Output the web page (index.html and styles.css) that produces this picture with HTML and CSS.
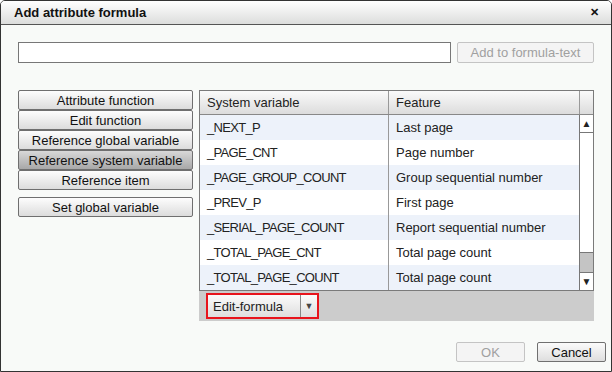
FILE: index.html
```html
<!DOCTYPE html>
<html lang="en">
<head>
    <meta charset="UTF-8">
    <title>Add attribute formula</title>
    <link rel="stylesheet" href="styles.css">
</head>
<body>

    <div class="dialog">
        <div class="titlebar">
            <span class="title">Add attribute formula</span>
            <span class="close">&#x2715;</span>
        </div>

        <div class="content">
            <div class="formula-row">
                <input type="text" class="formula-input">
                <button type="button" class="btn add-btn" disabled>Add to formula-text</button>
            </div>

            <div class="main">
                <div class="side">
                    <div class="side-group">
                        <button type="button" class="side-btn">Attribute function</button>
                        <button type="button" class="side-btn">Edit function</button>
                        <button type="button" class="side-btn">Reference global variable</button>
                        <button type="button" class="side-btn active">Reference system variable</button>
                        <button type="button" class="side-btn">Reference item</button>
                    </div>
                    <button type="button" class="side-btn">Set global variable</button>
                </div>

                <div class="panel">
                    <div class="grid">
                        <div class="grid-head">
                            <div class="cell">System variable</div>
                            <div class="cell">Feature</div>
                            <div class="cell corner"></div>
                        </div>
                        <div class="grid-body">
                            <div class="rows">
                                <div class="row"><div class="cell name">_NEXT_P</div><div class="cell">Last page</div></div>
                                <div class="row"><div class="cell name">_PAGE_CNT</div><div class="cell">Page number</div></div>
                                <div class="row"><div class="cell name">_PAGE_GROUP_COUNT</div><div class="cell">Group sequential number</div></div>
                                <div class="row"><div class="cell name">_PREV_P</div><div class="cell">First page</div></div>
                                <div class="row"><div class="cell name">_SERIAL_PAGE_COUNT</div><div class="cell">Report sequential number</div></div>
                                <div class="row"><div class="cell name">_TOTAL_PAGE_CNT</div><div class="cell">Total page count</div></div>
                                <div class="row"><div class="cell name">_TOTAL_PAGE_COUNT</div><div class="cell">Total page count</div></div>
                            </div>
                            <div class="scrollbar">
                                <div class="arrow">&#9650;</div>
                                <div class="track"><div class="thumb"></div></div>
                                <div class="arrow">&#9660;</div>
                            </div>
                        </div>
                    </div>
                    <div class="toolbar">
                        <div class="split-btn">
                            <span class="split-label">Edit-formula</span>
                            <span class="split-arrow">&#9660;</span>
                        </div>
                    </div>
                </div>
            </div>
        </div>

        <div class="footer">
            <button type="button" class="btn ok-btn" disabled>OK</button>
            <button type="button" class="btn">Cancel</button>
        </div>
    </div>

</body>
</html>
```

FILE: styles.css
```css
body {
    margin: 0;
    padding: 0;
    font-family: 'Liberation Sans', Arial, sans-serif;
    font-size: 13px;
    color: #222;
    background-color: #ffffff;
}
.dialog {
    width: 612px;
    height: 372px;
    box-sizing: border-box;
    border: 1px solid #333;
    border-radius: 5px 5px 0 0;
    background-color: #f8faf8;
    display: flex;
    flex-direction: column;
    overflow: hidden;
}
.titlebar {
    height: 23px;
    border-bottom: 1px solid #555;
    background: linear-gradient(#ffffff, #dcdddc);
    display: flex;
    align-items: center;
    justify-content: space-between;
    padding: 0 12px 0 13px;
}
.title {
    font-weight: bold;
    font-size: 13px;
    color: #111;
}
.close {
    font-size: 11px;
    font-weight: bold;
    color: #111;
}
.content {
    padding: 17px 16px 0 17px;
    flex: 1;
}
.formula-row {
    display: flex;
    gap: 6px;
}
.formula-input {
    width: 433px;
    height: 21px;
    box-sizing: border-box;
    border: 1px solid #777;
    background-color: #fff;
    margin: 0;
    padding: 0 4px;
}
.btn {
    height: 21px;
    box-sizing: border-box;
    border: 1px solid #707070;
    border-radius: 2px;
    background: linear-gradient(#fbfbfb, #dedede);
    font-family: inherit;
    font-size: 13px;
    color: #111;
    padding: 0;
    margin: 0;
}
.btn:disabled {
    border-color: #c4c4c4;
    background: #f4f4f4;
    color: #a0a0a0;
}
.add-btn {
    width: 137px;
}
.main {
    display: flex;
    gap: 6px;
    margin-top: 27px;
}
.side {
    width: 175px;
    display: flex;
    flex-direction: column;
    gap: 7px;
}
.side-group {
    display: flex;
    flex-direction: column;
}
.side-btn {
    height: 20px;
    box-sizing: border-box;
    border: 1px solid #6f6f6f;
    border-radius: 2px;
    background: linear-gradient(#fdfdfd, #dcdcdc);
    font-family: inherit;
    font-size: 13px;
    color: #111;
    padding: 0;
    margin: 0;
}
.side-btn.active {
    background: linear-gradient(#d8d8d8, #a8a8a8);
}
.panel {
    width: 395px;
}
.grid {
    border: 1px solid #7a7a7a;
    background-color: #fff;
}
.grid-head {
    display: grid;
    grid-template-columns: 188px 191px 14px;
    height: 23px;
    border-bottom: 1px solid #888;
    background: linear-gradient(#fafafa, #dcdcdc);
}
.cell {
    padding-left: 7px;
    display: flex;
    align-items: center;
    white-space: nowrap;
}
.cell.name {
    letter-spacing: -0.7px;
}
.grid-head .cell + .cell {
    border-left: 1px solid #999;
}
.grid-head .corner {
    padding: 0;
}
.grid-body {
    display: flex;
}
.rows {
    width: 379px;
}
.row {
    display: grid;
    grid-template-columns: 188px 191px;
    height: 25px;
}
.row:nth-child(odd) {
    background-color: #edf2fa;
}
.row .cell + .cell {
    border-left: 1px solid #999;
}
.scrollbar {
    width: 14px;
    border-left: 1px solid #777;
    display: flex;
    flex-direction: column;
    background-color: #fff;
}
.arrow {
    height: 17px;
    font-size: 10px;
    display: flex;
    align-items: center;
    justify-content: center;
    color: #222;
}
.arrow:first-child {
    border-bottom: 1px solid #777;
}
.arrow:last-child {
    border-top: 1px solid #777;
}
.track {
    flex: 1;
    display: flex;
    flex-direction: column;
    justify-content: flex-end;
}
.thumb {
    height: 19px;
    border-top: 1px solid #777;
    background-color: #c4c4c4;
}
.toolbar {
    height: 30px;
    background-color: #cccccc;
    display: flex;
    align-items: center;
    padding-left: 7px;
}
.split-btn {
    width: 109px;
    height: 22px;
    border: 2px solid #e8141c;
    background: linear-gradient(#fbfbfb, #dedede);
    display: flex;
    align-items: center;
}
.split-label {
    width: 93px;
    padding-left: 5px;
    box-sizing: border-box;
    border-right: 1px solid #888;
    height: 100%;
    display: flex;
    align-items: center;
}
.split-arrow {
    flex: 1;
    text-align: center;
    font-size: 9px;
    color: #444;
}
.footer {
    display: flex;
    justify-content: flex-end;
    gap: 12px;
    padding: 0 5px 9px 0;
}
.footer .btn {
    width: 69px;
    height: 20px;
}
```
